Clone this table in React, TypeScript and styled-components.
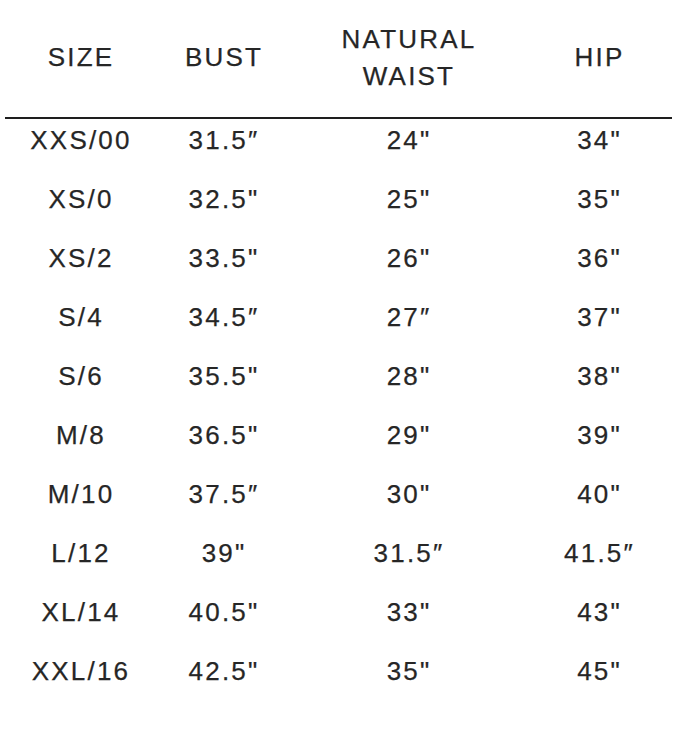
import React from "react";
import styled, { createGlobalStyle } from "styled-components";

const Global = createGlobalStyle`
  html, body { margin: 0; padding: 0; background: #ffffff; }
  body { font-family: "Liberation Sans", Arial, sans-serif; }
`;

const Chart = styled.div`
  width: 667px;
  margin-left: 5px;
  color: #262626;
  font-family: "Liberation Sans", Arial, sans-serif;
  font-size: 26px;
  letter-spacing: 2.2px;
  -webkit-text-stroke: 0.25px #262626;
`;

const Grid = styled.div`
  display: grid;
  grid-template-columns: 152px 134px 236px 145px;
`;

const HeaderRow = styled(Grid)`
  height: 117px;
  align-items: center;
  border-bottom: 2.5px solid #1e1e1e;
`;

const HeaderCell = styled.div`
  text-align: center;
  line-height: 37px;
  padding-bottom: 2px;
`;

const Row = styled(Grid)`
  height: 59px;
`;

const Cell = styled.div`
  text-align: center;
  line-height: 43px;
`;

type Size = [string, string, string, string];

const rows: Size[] = [
  ["XXS/00", "31.5″", "24\"", "34\""],
  ["XS/0", "32.5\"", "25\"", "35\""],
  ["XS/2", "33.5\"", "26\"", "36\""],
  ["S/4", "34.5″", "27″", "37\""],
  ["S/6", "35.5\"", "28\"", "38\""],
  ["M/8", "36.5\"", "29\"", "39\""],
  ["M/10", "37.5″", "30\"", "40\""],
  ["L/12", "39\"", "31.5″", "41.5″"],
  ["XL/14", "40.5\"", "33\"", "43\""],
  ["XXL/16", "42.5\"", "35\"", "45\""],
];

export default function App() {
  return (
    <>
      <Global />
      <Chart>
        <HeaderRow>
          <HeaderCell>SIZE</HeaderCell>
          <HeaderCell>BUST</HeaderCell>
          <HeaderCell>
            NATURAL
            <br />
            WAIST
          </HeaderCell>
          <HeaderCell>HIP</HeaderCell>
        </HeaderRow>
        {rows.map((r) => (
          <Row key={r[0]}>
            {r.map((c, i) => (
              <Cell key={i}>{c}</Cell>
            ))}
          </Row>
        ))}
      </Chart>
    </>
  );
}
